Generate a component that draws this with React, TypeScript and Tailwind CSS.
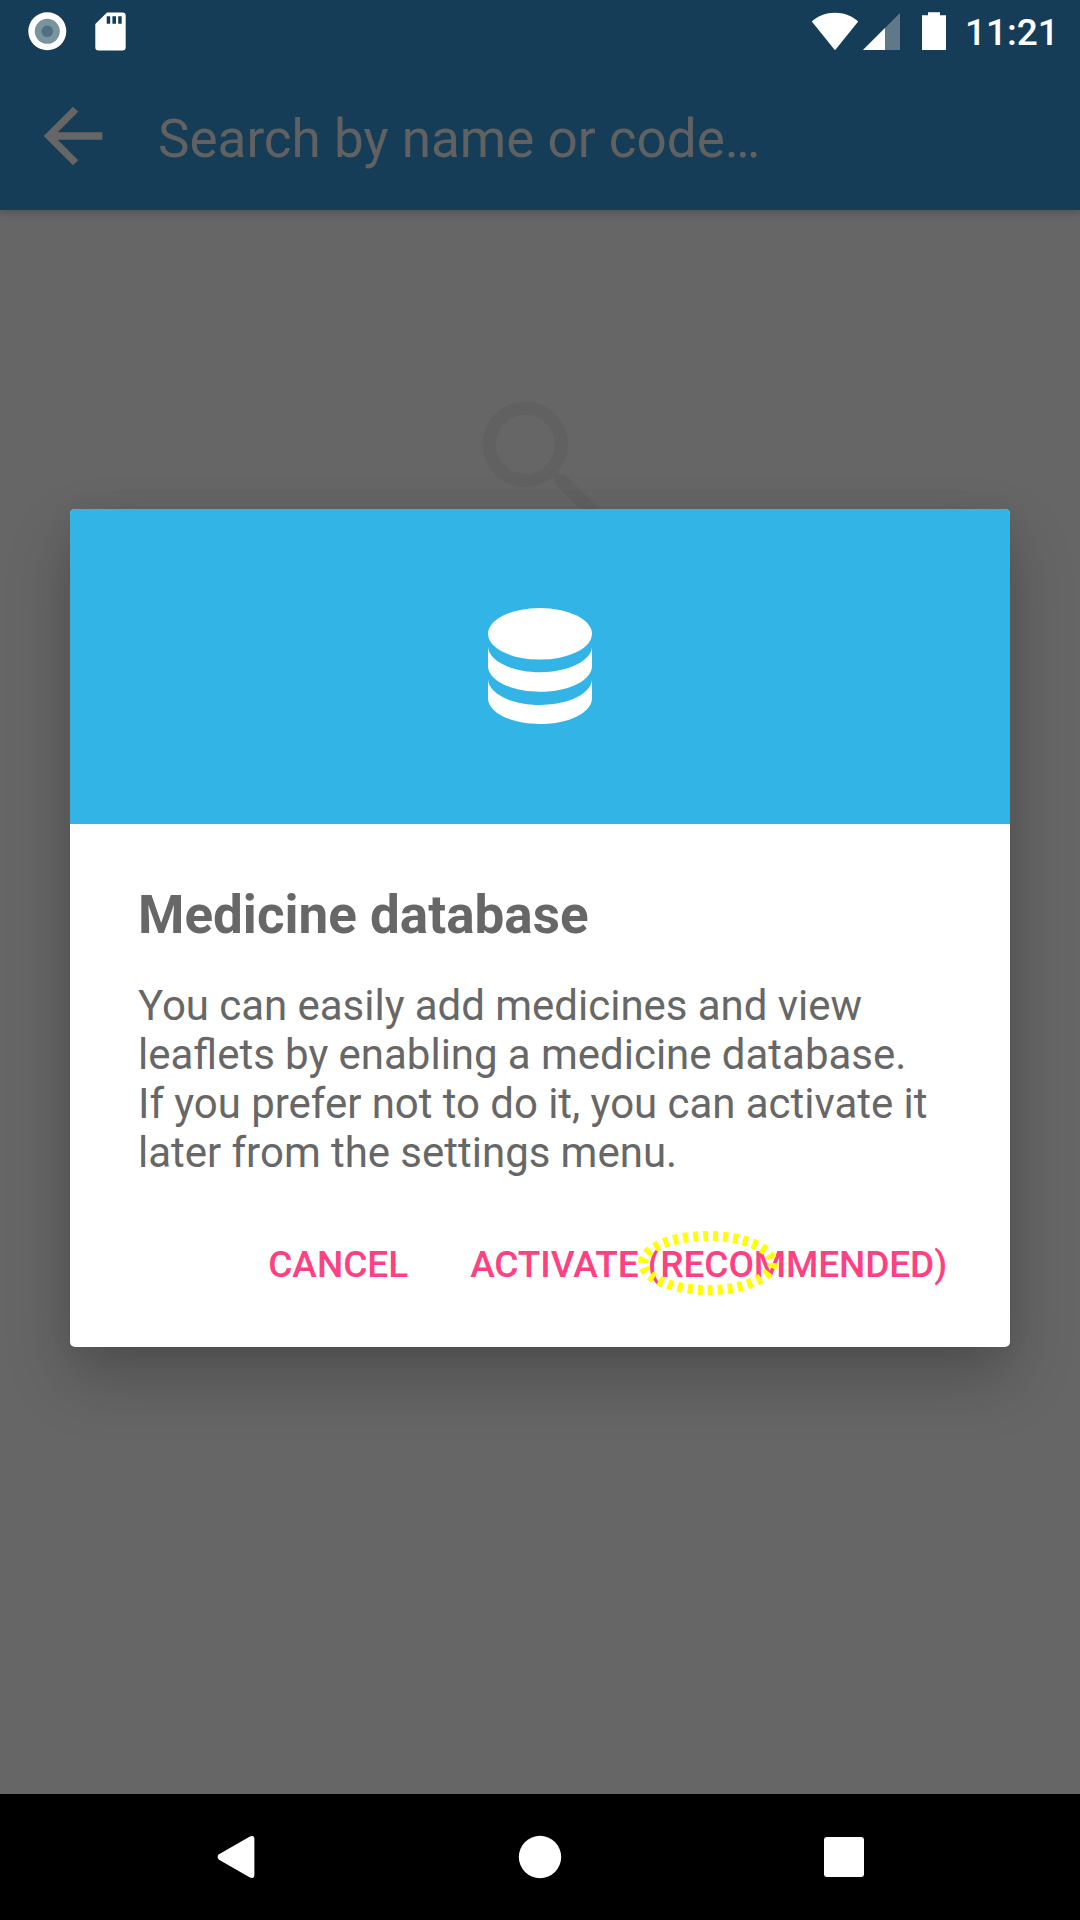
import React from 'react';

function StatusBar() {
  return (
    <div className="flex h-[63px] items-start justify-between pl-7 pr-[22px]">
      <svg width="110" height="63" viewBox="28 0 110 63">
        <circle cx="47.3" cy="31.3" r="19" fill="#fff" />
        <circle cx="47.3" cy="31.3" r="12.5" fill="#7b929f" />
        <circle cx="47.3" cy="31.3" r="5.8" fill="#4f6f83" />
        <path
          fill="#fff"
          fillRule="evenodd"
          d="M107 12.4h15.5a3.2 3.2 0 0 1 3.2 3.2v31.7a3.2 3.2 0 0 1-3.2 3.2H98.5a3.2 3.2 0 0 1-3.2-3.2V24zM106.7 16.2v7.6h3.5v-7.6zM112.4 16.2v7.6h3.6v-7.6zM118.2 16.2v7.6h3.5v-7.6z"
        />
      </svg>
      <div className="flex">
        <svg width="156" height="63" viewBox="810 0 156 63">
          <path fill="#fff" d="M835 50.2 811.8 21.6C818 16 826 12.8 835 12.8s17 3.2 23.2 8.8z" />
          <path fill="#5f788a" d="M900 13v37h-37z" />
          <path fill="#fff" d="M885 28v22h-22z" />
          <path fill="#fff" d="M928 12.3h12v2.9h6V50h-24V15.2h6z" />
        </svg>
        <span className="-ml-px mr-px mt-[7px] h-[52px] w-[92px] whitespace-nowrap text-[37px] font-medium leading-[52px] text-white">11:21</span>
      </div>
    </div>
  );
}

function AppBar() {
  return (
    <div className="flex h-[147px] items-start pl-[29px]">
      <svg className="mt-[29px]" width="88" height="88" viewBox="0 0 24 24" fill="#666">
        <path d="M20 11H7.83l5.59-5.59L12 4l-8 8 8 8 1.41-1.41L7.83 13H20v-2z" />
      </svg>
      <span className="ml-[41px] mt-[45px] whitespace-nowrap text-[53px] leading-[62px] text-[#616161]">Search by name or code…</span>
    </div>
  );
}

function Dialog() {
  return (
    <div className="absolute left-[70px] top-[509px] flex h-[838px] w-[940px] flex-col overflow-visible rounded-[5px] bg-white shadow-[0_31px_64px_rgba(0,0,0,0.23),0_0_26px_rgba(0,0,0,0.06)]">
      <div className="flex h-[315px] shrink-0 items-start justify-center rounded-t-[5px] bg-[#33b4e6] pt-[99px]">
        <svg width="104" height="116" viewBox="0 0 104 116" fill="#fff">
          <ellipse cx="52" cy="25.8" rx="52" ry="25.8" />
          <path d="M0 38.3C0 52.6 23.3 64.2 52 64.2s52-11.6 52-25.9V58c0 14.3-23.3 25.8-52 25.8S0 72.3 0 58z" />
          <path d="M0 71C0 85.3 23.3 96.9 52 96.9s52-11.6 52-25.9V90.2c0 14.3-23.3 25.8-52 25.8S0 104.5 0 90.2z" />
        </svg>
      </div>
      <div className="flex flex-col px-[68px] pt-[60px] text-[#676767]">
        <h1 className="text-[53px] font-bold leading-[62px]">Medicine database</h1>
        <p className="mt-[35px] whitespace-nowrap text-[42px] leading-[49px] [word-spacing:-0.2px]">
          You can easily add medicines and view
          <br />
          leaflets by enabling a medicine database.
          <br />
          If you prefer not to do it, you can activate it
          <br />
          later from the settings menu.
        </p>
      </div>
      <div className="mt-[63px] flex justify-end gap-[62px] whitespace-nowrap pr-[63px] text-[37px] font-medium leading-[50px] text-[#ff4081]">
        <button>CANCEL</button>
        <button className="tracking-[-0.1px]">ACTIVATE (RECOMMENDED)</button>
      </div>
      <svg className="absolute left-[566px] top-[720px]" width="144" height="68" viewBox="636 1229 144 68" fill="none">
        <ellipse cx="707.8" cy="1263" rx="64.8" ry="27" stroke="#ff0" strokeWidth="10" strokeDasharray="5.01 5.01" />
      </svg>
    </div>
  );
}

function NavBar() {
  return (
    <div className="h-[126px] bg-black">
      <svg width="1080" height="126" viewBox="0 1794 1080 126" fill="#fff">
        <path d="M219 1854.3 249.5 1836.7Q254.4 1834.5 254.4 1839.5V1874.5Q254.4 1879.5 249.5 1877.3L219 1859.7Q216.2 1857 219 1854.3z" />
        <circle cx="540" cy="1857" r="21.2" />
        <rect x="824" y="1837" width="40" height="40" rx="3" />
      </svg>
    </div>
  );
}

export default function App() {
  return (
    <div className="relative flex h-[1920px] w-[1080px] flex-col overflow-hidden bg-[#666] font-[Roboto,sans-serif]">
      <header className="z-0 h-[210px] shrink-0 bg-[#163d57] shadow-[0_2px_9px_rgba(0,0,0,0.22)]">
        <StatusBar />
        <AppBar />
      </header>
      <main className="flex flex-1 justify-center pl-[3px] pt-[172px]">
        <svg className="h-[157.5px] w-[157.5px]" viewBox="0 0 24 24" fill="#616161">
          <path d="M15.5 14h-.79l-.28-.27C15.41 12.59 16 11.11 16 9.5 16 5.91 13.09 3 9.5 3S3 5.91 3 9.5 5.91 16 9.5 16c1.61 0 3.09-.59 4.23-1.57l.27.28v.79l5 4.99L20.49 19l-4.99-5zm-6 0C7.01 14 5 11.99 5 9.5S7.01 5 9.5 5 14 7.01 14 9.5 11.99 14 9.5 14z" />
        </svg>
      </main>
      <Dialog />
      <NavBar />
    </div>
  );
}
